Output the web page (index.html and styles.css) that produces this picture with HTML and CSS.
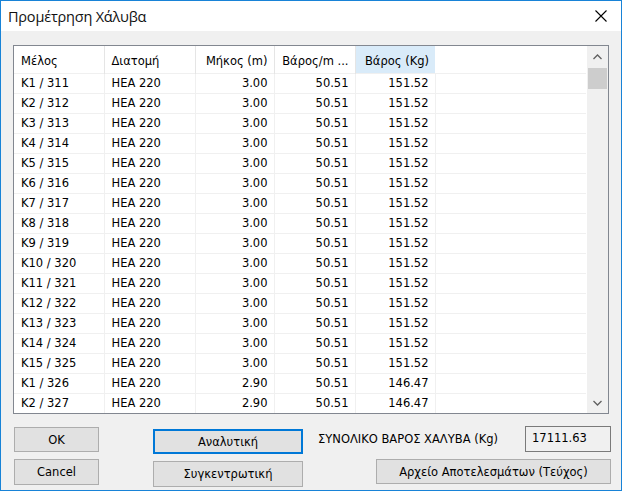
FILE: index.html
```html
<!DOCTYPE html>
<html>
<head>
<meta charset="utf-8">
<link rel="stylesheet" href="styles.css">
</head>
<body>
<div class="window">
  <div class="titlebar">
    <span class="title">Προμέτρηση Χάλυβα</span>
    <svg class="close" width="12" height="12" viewBox="0 0 12 12"><path d="M0.5 0.5 L11.5 11.5 M11.5 0.5 L0.5 11.5" stroke="#000" stroke-width="1.1" fill="none"/></svg>
  </div>
  <div class="client">
    <div class="list">
      <div class="table-area">
        <table class="grid">
          <colgroup>
            <col class="c1"><col class="c2"><col class="c3"><col class="c4"><col class="c5"><col>
          </colgroup>
          <thead>
            <tr>
              <th class="l">Μέλος</th>
              <th class="l">Διατομή</th>
              <th class="r">Μήκος (m)</th>
              <th class="r">Βάρος/m ...</th>
              <th class="r sorted">Βάρος (Kg)</th>
              <th class="filler"></th>
            </tr>
          </thead>
          <tbody>
            <tr><td>K1 / 311</td><td>HEA 220</td><td class="r">3.00</td><td class="r">50.51</td><td class="r">151.52</td><td></td></tr>
            <tr><td>K2 / 312</td><td>HEA 220</td><td class="r">3.00</td><td class="r">50.51</td><td class="r">151.52</td><td></td></tr>
            <tr><td>K3 / 313</td><td>HEA 220</td><td class="r">3.00</td><td class="r">50.51</td><td class="r">151.52</td><td></td></tr>
            <tr><td>K4 / 314</td><td>HEA 220</td><td class="r">3.00</td><td class="r">50.51</td><td class="r">151.52</td><td></td></tr>
            <tr><td>K5 / 315</td><td>HEA 220</td><td class="r">3.00</td><td class="r">50.51</td><td class="r">151.52</td><td></td></tr>
            <tr><td>K6 / 316</td><td>HEA 220</td><td class="r">3.00</td><td class="r">50.51</td><td class="r">151.52</td><td></td></tr>
            <tr><td>K7 / 317</td><td>HEA 220</td><td class="r">3.00</td><td class="r">50.51</td><td class="r">151.52</td><td></td></tr>
            <tr><td>K8 / 318</td><td>HEA 220</td><td class="r">3.00</td><td class="r">50.51</td><td class="r">151.52</td><td></td></tr>
            <tr><td>K9 / 319</td><td>HEA 220</td><td class="r">3.00</td><td class="r">50.51</td><td class="r">151.52</td><td></td></tr>
            <tr><td>K10 / 320</td><td>HEA 220</td><td class="r">3.00</td><td class="r">50.51</td><td class="r">151.52</td><td></td></tr>
            <tr><td>K11 / 321</td><td>HEA 220</td><td class="r">3.00</td><td class="r">50.51</td><td class="r">151.52</td><td></td></tr>
            <tr><td>K12 / 322</td><td>HEA 220</td><td class="r">3.00</td><td class="r">50.51</td><td class="r">151.52</td><td></td></tr>
            <tr><td>K13 / 323</td><td>HEA 220</td><td class="r">3.00</td><td class="r">50.51</td><td class="r">151.52</td><td></td></tr>
            <tr><td>K14 / 324</td><td>HEA 220</td><td class="r">3.00</td><td class="r">50.51</td><td class="r">151.52</td><td></td></tr>
            <tr><td>K15 / 325</td><td>HEA 220</td><td class="r">3.00</td><td class="r">50.51</td><td class="r">151.52</td><td></td></tr>
            <tr><td>K1 / 326</td><td>HEA 220</td><td class="r">2.90</td><td class="r">50.51</td><td class="r">146.47</td><td></td></tr>
            <tr><td>K2 / 327</td><td>HEA 220</td><td class="r">2.90</td><td class="r">50.51</td><td class="r">146.47</td><td></td></tr>
          </tbody>
        </table>
      </div>
      <div class="scrollbar">
        <div class="arrow">
          <svg width="9" height="6" viewBox="0 0 9 6"><path d="M0.5 5 L4.5 1 L8.5 5" stroke="#606060" stroke-width="1.3" fill="none"/></svg>
        </div>
        <div class="track"><div class="thumb"></div></div>
        <div class="arrow">
          <svg width="9" height="6" viewBox="0 0 9 6"><path d="M0.5 1 L4.5 5 L8.5 1" stroke="#606060" stroke-width="1.3" fill="none"/></svg>
        </div>
      </div>
    </div>
    <div class="bottom">
      <div class="col1">
        <button class="btn ok">OK</button>
        <button class="btn cancel">Cancel</button>
      </div>
      <div class="col2">
        <button class="btn focused">Αναλυτική</button>
        <button class="btn summary">Συγκεντρωτική</button>
      </div>
      <div class="col3">
        <div class="total-row">
          <span class="label">ΣΥΝΟΛΙΚΟ ΒΑΡΟΣ ΧΑΛΥΒΑ (Kg)</span>
          <div class="textbox">17111.63</div>
        </div>
        <button class="btn archive">Αρχείο Αποτελεσμάτων (Τεύχος)</button>
      </div>
    </div>
  </div>
</div>
</body>
</html>
```
FILE: styles.css
```css
* { box-sizing: border-box; }
html, body { margin: 0; padding: 0; }
body { width: 622px; height: 491px; overflow: hidden; background: #fff; font-family: "DejaVu Sans", sans-serif; font-size: 11.5px; color: #000; }

.window { width: 622px; height: 491px; border: 1px solid #1883d7; display: flex; flex-direction: column; background: #f0f0f0; }

.titlebar { height: 30px; background: #fff; display: flex; align-items: center; padding-left: 7px; padding-right: 14px; flex: none; }
.title { font-family: "Open Sans", "Noto Sans", sans-serif; font-size: 14.5px; color: #111; flex: 1; letter-spacing: -0.2px; }
.close { display: block; }

.client { flex: 1; padding: 14px 10px 0 12px; display: flex; flex-direction: column; }

.list { height: 369px; margin-right: 2px; border: 1px solid #828790; background: #fff; display: flex; flex: none; }
.table-area { flex: 1; overflow: hidden; }
.grid { border-collapse: collapse; table-layout: fixed; width: 572px; }
.grid col.c1 { width: 90px; }
.grid col.c2 { width: 91px; }
.grid col.c3 { width: 79px; }
.grid col.c4 { width: 81px; }
.grid col.c5 { width: 80px; }
.grid th { height: 27px; font-weight: normal; padding: 3px 6px 0 7px; white-space: nowrap; overflow: hidden; border-right: 1px solid #e5e5e5; }
.grid th.l, .grid td { text-align: left; }
.grid th.r, .grid td.r { text-align: right; }
.grid th.sorted { background: #d9ebf9; border-right: none; }
.grid th.filler { border-right: none; }
.grid td { height: 20px; padding: 0 6px 0 7px; white-space: nowrap; border-top: 1px solid #f0f0f0; border-right: 1px solid #f0f0f0; }
.grid td:last-child { border-right: none; }

.scrollbar { width: 21px; background: #f0f0f0; display: flex; flex-direction: column; flex: none; }
.arrow { height: 21px; display: flex; align-items: center; justify-content: center; }
.track { flex: 1; padding: 1px 1px 0 1px; }
.thumb { height: 21px; background: #cdcdcd; }

.bottom { display: flex; margin-top: 13px; }
.btn { font-family: "DejaVu Sans", sans-serif; font-size: 11.5px; color: #000; background: #e1e1e1; border: 1px solid #adadad; padding: 0; display: flex; align-items: center; justify-content: center; }
.col1 { display: flex; flex-direction: column; width: 85px; margin-left: 1px; gap: 7px; }
.ok { height: 25px; }
.cancel { height: 26px; }
.col2 { display: flex; flex-direction: column; width: 150px; margin-left: 54px; padding-top: 2px; gap: 7px; }
.focused { height: 25px; border: 2px solid #0078d7; }
.summary { height: 26px; }
.col3 { flex: 1; margin-left: 15px; display: flex; flex-direction: column; }
.total-row { display: flex; align-items: center; height: 26px; margin-top: -1px; }
.label { flex: 1; padding-bottom: 1px; }
.textbox { width: 86px; height: 26px; border: 1px solid #7a7a7a; background: #f0f0f0; padding-left: 6px; display: flex; align-items: center; padding-bottom: 2px; }
.archive { height: 25px; width: 235px; margin-left: auto; margin-top: 7px; }
```
